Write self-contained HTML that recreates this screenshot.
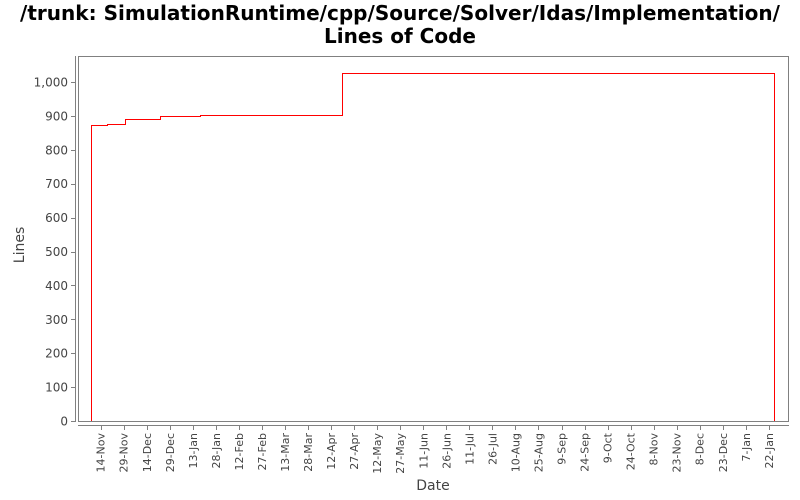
<!DOCTYPE html>
<html><head><meta charset="utf-8"><style>
html,body{margin:0;padding:0;background:#fff;width:800px;height:500px;overflow:hidden}
svg{display:block}
text{font-family:"DejaVu Sans","Liberation Sans",sans-serif}
</style></head><body>
<svg id="s" width="800" height="500" xmlns="http://www.w3.org/2000/svg">
<text x="400" y="20" text-anchor="middle" font-size="20" font-weight="bold" fill="#000" textLength="760" lengthAdjust="spacingAndGlyphs">/trunk: SimulationRuntime/cpp/Source/Solver/Idas/Implementation/</text>
<text x="400" y="43" text-anchor="middle" font-size="20" font-weight="bold" fill="#000">Lines of Code</text>
<rect x="78.5" y="56.5" width="710" height="365" fill="#fff" stroke="#808080" stroke-width="1"/>
<line x1="75.5" y1="56" x2="75.5" y2="422" stroke="#808080"/>
<line x1="78" y1="425.5" x2="789" y2="425.5" stroke="#808080"/>
<g id="y" font-size="12" fill="#444" text-anchor="end"></g>
<g id="x" font-size="11" fill="#444"></g>
<polyline fill="none" stroke="#f00" stroke-width="1" shape-rendering="crispEdges" points="91.5,421 91.5,125.5 107.5,125.5 107.5,124.5 125.5,124.5 125.5,119.5 160.5,119.5 160.5,116.5 200.5,116.5 200.5,115.5 342.5,115.5 342.5,73.5 774.5,73.5 774.5,421"/>
<text transform="translate(24,245) rotate(-90)" text-anchor="middle" font-size="14" fill="#444">Lines</text>
<text x="433" y="490" text-anchor="middle" font-size="14" fill="#444">Date</text>
</svg>
<script>
var ns="http://www.w3.org/2000/svg",s=document.getElementById('s');
function el(n,a,p,t){var e=document.createElementNS(ns,n);for(var k in a)e.setAttribute(k,a[k]);if(t)e.textContent=t;(p||s).appendChild(e);return e;}
var yg=document.getElementById('y');
for(var v=0;v<=1000;v+=100){var y=421-v*0.339;
el('line',{x1:71,y1:Math.round(y)+0.5,x2:75,y2:Math.round(y)+0.5,stroke:'#808080'});
el('text',{x:68,y:(y+4.5).toFixed(1)},yg,v==1000?'1,000':String(v));}
var L="14-Nov,29-Nov,14-Dec,29-Dec,13-Jan,28-Jan,12-Feb,27-Feb,13-Mar,28-Mar,12-Apr,27-Apr,12-May,27-May,11-Jun,26-Jun,11-Jul,26-Jul,10-Aug,25-Aug,9-Sep,24-Sep,9-Oct,24-Oct,8-Nov,23-Nov,8-Dec,23-Dec,7-Jan,22-Jan".split(',');
var xg=document.getElementById('x');
L.forEach(function(t,i){var x=100.7+23.04*i,xr=Math.round(x)+0.5;
el('line',{x1:xr,y1:426,x2:xr,y2:430,stroke:'#808080'});
el('text',{transform:'translate('+(x+4).toFixed(1)+',433) rotate(-90)','text-anchor':'end'},xg,t);});
</script>
</body></html>
